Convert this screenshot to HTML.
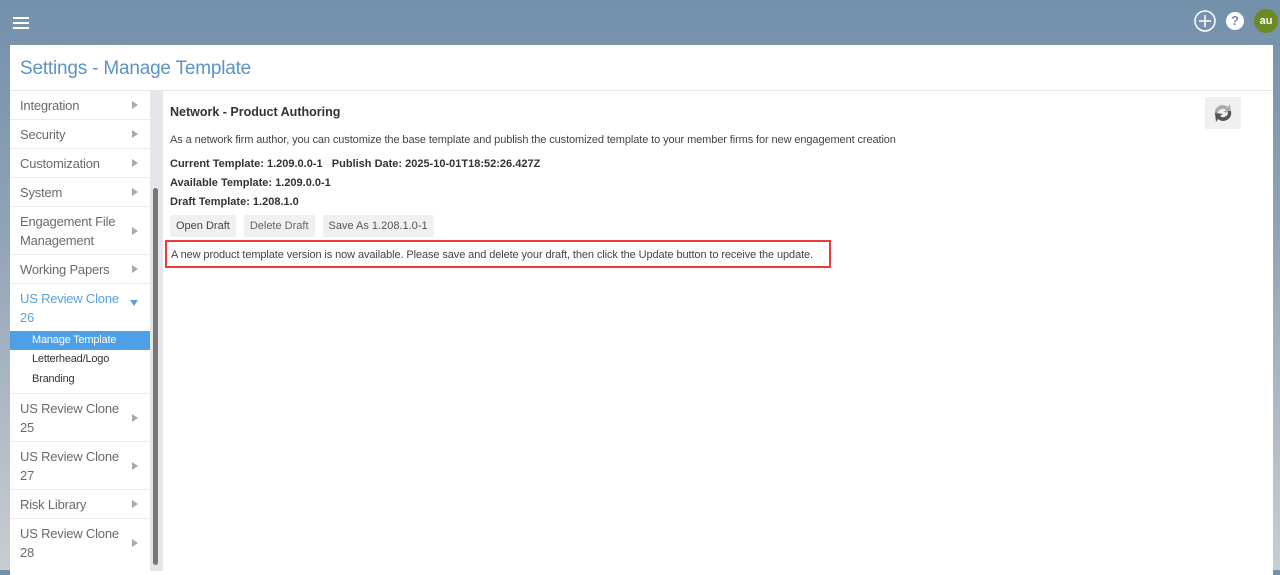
<!DOCTYPE html>
<html><head><style>
*{margin:0;padding:0;box-sizing:border-box}
body{width:1280px;height:570px;overflow:hidden;background:linear-gradient(#7390ab 0%,#8fa3b6 40%,#c9cdd2 100%);font-family:"Liberation Sans",sans-serif;position:relative}
.ham{position:absolute;left:13px;top:17px;width:16px}
.ham div{height:2px;background:#fff;margin-bottom:3px}
.card{position:absolute;left:10px;top:45px;width:1263px;height:530px;background:#fff}
.title{position:absolute;left:10px;top:13px;font-size:19px;color:#5b93c4;letter-spacing:-0.2px}
.hline{position:absolute;left:0;right:0;top:45px;height:1px;background:#e6e6e6}
.side{position:absolute;left:0;top:46px;width:140px}
.it{position:relative;border-bottom:1px solid #ececec;color:#6a6a6a;font-size:13px;letter-spacing:-0.2px;line-height:19px;padding:5px 18px 4px 10px}
.it .ar{position:absolute;right:12px;top:50%;margin-top:-4px;width:0;height:0;border-left:6px solid #aaa;border-top:4px solid transparent;border-bottom:4px solid transparent}
.sub{font-size:11px;color:#333;padding-left:22px;line-height:19.5px}
.track{position:absolute;left:140px;top:46px;width:13px;height:480px;background:#e4e6e9}
.thumb{position:absolute;left:143px;top:143px;width:5px;height:377px;background:#777;border-radius:3px}
.main{position:absolute;left:160px;top:47px;color:#333;font-size:11px}
.btn{display:inline-block;background:#f0f0f0;color:#444;font-size:11px;padding:5px 6px;margin-right:8px;border-radius:2px}
</style></head><body>
<div class="ham"><div></div><div></div><div></div></div>
<svg style="position:absolute;left:1194px;top:10px" width="22" height="22"><circle cx="11" cy="11" r="10" fill="none" stroke="#fff" stroke-width="1.5"/><path d="M11 5v12M5 11h12" stroke="#fff" stroke-width="1.5"/></svg>
<div style="position:absolute;left:1226px;top:12px;width:18px;height:18px;border-radius:50%;background:#fff;color:#7390ab;font-weight:bold;font-size:13px;text-align:center;line-height:18px">?</div>
<div style="position:absolute;left:1254px;top:9px;width:24px;height:24px;border-radius:50%;background:#6c8a22;color:#fff;font-weight:bold;font-size:11px;text-align:center;line-height:24px">au</div>
<div class="card">
<div class="title">Settings - Manage Template</div>
<div class="hline"></div>
<div class="side">
<div class="it" style="height:29px">Integration<span class="ar"></span></div>
<div class="it" style="height:29px">Security<span class="ar"></span></div>
<div class="it" style="height:29px">Customization<span class="ar"></span></div>
<div class="it" style="height:29px">System<span class="ar"></span></div>
<div class="it" style="height:48px">Engagement File<br>Management<span class="ar"></span></div>
<div class="it" style="height:29px">Working Papers<span class="ar"></span></div>
<div class="it" style="height:110px;color:#5aa0dc;padding-top:5px">US Review Clone<br>26<span class="ar" style="top:20px;border-left:4px solid transparent;border-right:4px solid transparent;border-top:6px solid #5aa0dc;border-bottom:0;right:12px"></span>
<div style="position:absolute;left:0;top:47px;width:140px">
<div class="sub" style="background:#4ea0e6;color:#fff;height:19px">Manage Template</div>
<div class="sub">Letterhead/Logo</div>
<div class="sub">Branding</div></div></div>
<div class="it" style="height:48px">US Review Clone<br>25<span class="ar"></span></div>
<div class="it" style="height:48px">US Review Clone<br>27<span class="ar"></span></div>
<div class="it" style="height:29px">Risk Library<span class="ar"></span></div>
<div class="it" style="height:48px;border:0">US Review Clone<br>28<span class="ar"></span></div>
</div>
<div class="track"></div><div class="thumb"></div>
<div class="main">
<div style="position:absolute;top:13px;font-weight:bold;font-size:12.5px;white-space:nowrap">Network - Product Authoring</div>
<div style="position:absolute;top:42px;white-space:nowrap;color:#444;letter-spacing:-0.1px">As a network firm author, you can customize the base template and publish the customized template to your member firms for new engagement creation</div>
<div style="position:absolute;top:66px;white-space:nowrap;font-weight:bold">Current Template: 1.209.0.0-1&nbsp;&nbsp;&nbsp;Publish Date: 2025-10-01T18:52:26.427Z</div>
<div style="position:absolute;top:85px;white-space:nowrap;font-weight:bold">Available Template: 1.209.0.0-1</div>
<div style="position:absolute;top:104px;white-space:nowrap;font-weight:bold">Draft Template: 1.208.1.0</div>
<div style="position:absolute;top:123px;white-space:nowrap"><span class="btn">Open Draft</span><span class="btn" style="color:#666">Delete Draft</span><span class="btn" style="color:#555">Save As 1.208.1.0-1</span></div>
<div style="position:absolute;top:148px;left:-5px;width:666px;height:28px;border:2px solid #ee3b3b;padding:7px 4px 0;white-space:nowrap;color:#444;letter-spacing:-0.1px">A new product template version is now available. Please save and delete your draft, then click the Update button to receive the update.</div>
</div>
<div style="position:absolute;left:1195px;top:52px;width:36px;height:32px;background:#f0f0f0;border-radius:2px">
<svg width="36" height="32" viewBox="0 0 36 32"><path d="M10 18a8 8 0 0 1 13-8l2-3 1 9-8-1 3-2a5 5 0 0 0-8 5z" fill="#aaa"/><path d="M26 14a8 8 0 0 1-13 8l-2 3-1-9 8 1-3 2a5 5 0 0 0 8-5z" fill="#555"/></svg></div>
</div>
</body></html>
